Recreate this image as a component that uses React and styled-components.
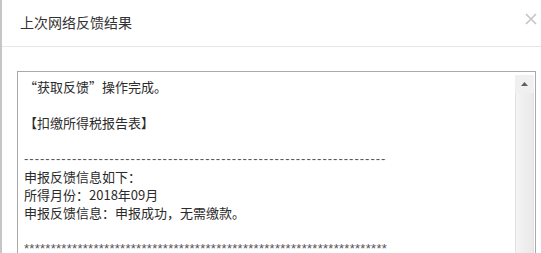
import styled, {createGlobalStyle} from 'styled-components';

const GlobalStyle = createGlobalStyle`
    html, body {
        margin: 0;
        padding: 0;
        height: 100%;
        overflow: hidden;
        background: #fff;
    }
    #root {
        height: 100%;
    }
`;

const Dialog = styled.div`
    height: 100%;
    box-sizing: border-box;
    border-left: 2px solid #c6c6c6;
    background: #fff;
    display: flex;
    flex-direction: column;
`;

const Header = styled.div`
    height: 46px;
    border-bottom: 1px solid #e6e6e6;
    display: flex;
    justify-content: space-between;
    align-items: flex-start;
    padding: 0 4px 0 18px;
`;

const Title = styled.h3`
    margin: 0;
    font-family: "Liberation Sans", "Noto Sans CJK SC", sans-serif;
    font-size: 14px;
    font-weight: normal;
    color: #333;
    line-height: 46px;
`;

const Close = styled.button`
    border: none;
    background: none;
    padding: 0;
    margin-top: 13px;
    width: 12px;
    height: 12px;
    cursor: pointer;
    display: flex;
`;

const Body = styled.div`
    flex: 1;
    padding: 24px 5px 0 15px;
`;

const ResultBox = styled.div`
    height: 240px;
    border: 1px solid #a9a9a9;
    display: flex;
    background: #fff;
`;

const Content = styled.div`
    flex: 1;
    padding: 6px 6px;
    font-family: "Noto Sans CJK SC", "Liberation Sans", sans-serif;
    font-size: 13px;
    line-height: 18px;
    color: #2b2b2b;
    white-space: pre;
    overflow: hidden;
`;

const Line = styled.div`
    height: 18px;
`;

const Rule = styled.div`
    height: 18px;
    font-family: "Liberation Sans", sans-serif;
    letter-spacing: ${({$spacing}) => $spacing};
    color: #555;
`;

const Scrollbar = styled.div`
    width: 19px;
    margin: 3px 1px 0 0;
    display: flex;
    flex-direction: column;
    background: #f0f0f0;
`;

const ScrollButton = styled.div`
    height: 17px;
    display: flex;
    align-items: center;
    justify-content: center;
`;

const Thumb = styled.div`
    flex: 1;
    margin-top: 1px;
    border-left: 1px solid #e2e2e2;
    border-right: 1px solid #e2e2e2;
    background: linear-gradient(to right, #f4f4f4, #e9e9e9);
`;

const lines = [
    {text: '“获取反馈”操作完成。'},
    {text: ''},
    {text: '【扣缴所得税报告表】'},
    {text: ''},
    {rule: '-'.repeat(68), spacing: '1px'},
    {text: '申报反馈信息如下：'},
    {text: '所得月份：2018年09月'},
    {text: '申报反馈信息：申报成功，无需缴款。'},
    {text: ''},
    {rule: '*'.repeat(68), spacing: '0.28px'},
    {text: ''},
];

export default function App() {
    return (
        <>
            <GlobalStyle />
            <Dialog>
                <Header>
                    <Title>上次网络反馈结果</Title>
                    <Close aria-label='关闭'>
                        <svg width='12' height='12' viewBox='0 0 12 12'>
                            <path d='M1 1 L11 11 M11 1 L1 11' stroke='#c4c4c4' strokeWidth='1.6' />
                        </svg>
                    </Close>
                </Header>
                <Body>
                    <ResultBox>
                        <Content>
                            {lines.map((l, i) => l.rule
                                ? <Rule key={i} $spacing={l.spacing}>{l.rule}</Rule>
                                : <Line key={i}>{l.text}</Line>)}
                        </Content>
                        <Scrollbar>
                            <ScrollButton>
                                <svg width='7' height='4' viewBox='0 0 7 4'>
                                    <path d='M0 4 L3.5 0 L7 4 Z' fill='#606060' />
                                </svg>
                            </ScrollButton>
                            <Thumb />
                        </Scrollbar>
                    </ResultBox>
                </Body>
            </Dialog>
        </>
    );
}
